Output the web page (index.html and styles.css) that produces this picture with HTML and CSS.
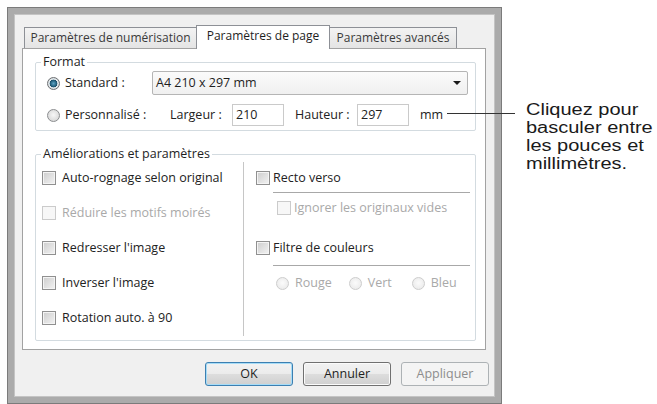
FILE: index.html
```html
<!DOCTYPE html>
<html lang="fr">
<head>
<meta charset="utf-8">
<title>Paramètres de page</title>
<link rel="stylesheet" href="styles.css">
</head>
<body>
<div class="page">
  <div class="dialog">
    <div class="client">
      <div class="tabs">
        <div class="tab t1">Paramètres de numérisation</div>
        <div class="tab t2 active">Paramètres de page</div>
        <div class="tab t3">Paramètres avancés</div>
      </div>
      <div class="panel">
        <fieldset class="group format">
          <legend>Format</legend>
          <div class="gbody">
            <div class="row r1">
              <span class="radio checked"></span>
              <span class="lbl std">Standard :</span>
              <div class="combo"><span>A4 210 x 297 mm</span><span class="arrow"></span></div>
            </div>
            <div class="row r2">
              <span class="radio"></span>
              <span class="lbl perso">Personnalisé :</span>
              <span class="lbl larg">Largeur :</span>
              <span class="input">210</span>
              <span class="lbl haut">Hauteur :</span>
              <span class="input">297</span>
              <span class="lbl mm">mm</span>
            </div>
          </div>
        </fieldset>
        <fieldset class="group enh">
          <legend>Améliorations et paramètres</legend>
          <div class="cols">
            <div class="col left">
              <div class="crow"><span class="check"></span><span>Auto-rognage selon original</span></div>
              <div class="crow disabled"><span class="check"></span><span>Réduire les motifs moirés</span></div>
              <div class="crow"><span class="check"></span><span>Redresser l'image</span></div>
              <div class="crow"><span class="check"></span><span>Inverser l'image</span></div>
              <div class="crow"><span class="check"></span><span>Rotation auto. à 90</span></div>
            </div>
            <div class="col right">
              <div class="crow"><span class="check"></span><span>Recto verso</span></div>
              <div class="sep"></div>
              <div class="crow sub disabled"><span class="check"></span><span>Ignorer les originaux vides</span></div>
              <div class="crow filtre"><span class="check"></span><span>Filtre de couleurs</span></div>
              <div class="sep"></div>
              <div class="radios disabled">
                <span class="ritem"><span class="radio"></span><span>Rouge</span></span>
                <span class="ritem vert"><span class="radio"></span><span>Vert</span></span>
                <span class="ritem bleu"><span class="radio"></span><span>Bleu</span></span>
              </div>
            </div>
          </div>
        </fieldset>
      </div>
      <div class="buttons">
        <button class="btn default">OK</button>
        <button class="btn">Annuler</button>
        <button class="btn disabled">Appliquer</button>
      </div>
    </div>
  </div>
  <div class="callout">
    <div class="ctext">Cliquez pour<br>basculer entre<br>les pouces et<br>millimètres.</div>
  </div>
</div>
</body>
</html>
```
FILE: styles.css
```css
* { box-sizing: border-box; }
html, body { margin: 0; background: #ffffff; }
body {
  font-family: "Open Sans", "Noto Sans", "DejaVu Sans", sans-serif;
  font-size: 12.5px;
  line-height: 16px;
  color: #222;
}
.page {
  display: flex;
  align-items: flex-start;
  padding: 7px 0 0 7px;
}
.dialog {
  width: 495px;
  height: 397px;
  border: 1px solid #7b7b7b;
  background: #ababab;
  padding: 6px;
  display: flex;
}
.client {
  flex: 1;
  border: 1px solid #c4c4c4;
  background: #f0f0f0;
  padding: 10px 5px 0 7px;
  display: flex;
  flex-direction: column;
}
.tabs {
  display: flex;
  height: 23px;
  margin-left: 2px;
  align-items: flex-end;
  position: relative;
  z-index: 1;
}
.tab {
  height: 21px;
  border: 1px solid #8d9096;
  border-bottom: none;
  background: linear-gradient(#f3f3f3, #e4e4e4);
  color: #3a3a3a;
  font-size: 12px;
  line-height: 19px;
  text-align: center;
  white-space: nowrap;
}
.t1 { width: 172px; border-right: none; }
.t2 { width: 134px; }
.t3 { width: 127px; border-left: none; }
.tab.active {
  height: 24px;
  margin-bottom: -1px;
  background: #ffffff;
  color: #1e1e1e;
  line-height: 20px;
}
.panel {
  height: 302px;
  margin-right: 3px;
  border: 1px solid #a2a2a2;
  background: #ffffff;
  padding: 5px 9px 0 12px;
}
.group {
  margin: 0;
  padding: 0;
  min-width: 0;
  border: 1px solid #d3dbe0;
  border-radius: 2px;
}
.group legend {
  margin-left: 5px;
  padding: 0 2px;
  line-height: 16px;
  color: #1e1e1e;
}
.format .gbody { padding: 1px 7px 4px 11px; }
.row { display: flex; align-items: center; }
.r1 { height: 24px; }
.r2 { height: 22px; margin-top: 9px; }
.radio {
  width: 13px;
  height: 13px;
  flex: none;
  border-radius: 50%;
  border: 1px solid #8b8d8f;
  background: radial-gradient(circle at 50% 45%, #f7f7f7 0, #dadada 6px);
}
.radio.checked {
  border-color: #6d7073;
  background: radial-gradient(circle at 50% 50%, #5ea4c4 0, #23607e 3px, #1d4d66 3.6px, #e8eef1 4.2px, #cfd3d6 6px);
}
.lbl { white-space: nowrap; }
.r1 .radio, .r2 .radio { margin-right: 5px; }
.std { width: 87px; }
.perso { width: 105px; }
.larg { width: 62px; }
.haut { width: 62px; margin-left: 11px; }
.mm { margin-left: 11px; }
.combo {
  width: 316px;
  height: 24px;
  border: 1px solid #b5b5b5;
  border-radius: 2px;
  background: linear-gradient(#fbfbfb, #f0f0f0);
  display: flex;
  align-items: center;
  padding-left: 3px;
  color: #1e1e1e;
}
.arrow {
  margin-left: auto;
  margin-right: 6px;
  width: 0;
  height: 0;
  border-left: 4px solid transparent;
  border-right: 4px solid transparent;
  border-top: 4px solid #1a1a1a;
}
.input {
  width: 52px;
  height: 22px;
  border: 1px solid #cacaca;
  background: #ffffff;
  padding-left: 3px;
  line-height: 20px;
}
.enh { margin-top: 15px; height: 195px; }
.cols { display: flex; height: 177px; padding-bottom: 3px; }
.col.left { width: 207px; padding: 6px 0 0 6px; }
.col.right {
  flex: 1;
  border-left: 1px solid #c6c6c6;
  padding: 6px 5px 0 12px;
}
.crow {
  height: 20px;
  display: flex;
  align-items: center;
  white-space: nowrap;
}
.col.left .crow + .crow { margin-top: 15px; }
.check {
  width: 14px;
  height: 14px;
  flex: none;
  border: 1px solid #909090;
  background: linear-gradient(135deg, #cdcdcd, #f3f3f3);
  box-shadow: inset 0 0 0 1px #f4f4f4;
}
.col.left .check { margin-right: 6px; }
.col.right .check { margin-right: 3px; }
.disabled { color: #a9a9a9; }
.disabled .check {
  border-color: #cbcbcb;
  background: #f7f7f7;
  box-shadow: none;
}
.disabled .radio {
  border-color: #cdcdcd;
  background: radial-gradient(circle at 50% 45%, #fbfbfb 0, #ececec 6px);
}
.sep {
  height: 1px;
  margin: 4px 0 0 17px;
  background: #a8a8a8;
}
.crow.sub { margin: 5px 0 0 21px; }
.crow.filtre { margin-top: 20px; }
.filtre + .sep { margin-top: 7px; }
.radios {
  display: flex;
  align-items: center;
  height: 20px;
  margin: 7px 0 0 20px;
}
.ritem { display: flex; align-items: center; }
.ritem .radio { margin-right: 6px; }
.vert { margin-left: 17px; }
.bleu { margin-left: 20px; }
.buttons {
  display: flex;
  justify-content: flex-end;
  gap: 10px;
  margin-top: 12px;
}
.btn {
  width: 88px;
  height: 24px;
  font: inherit;
  font-size: 12.5px;
  color: #1e1e1e;
  border: 1px solid #707070;
  border-radius: 3px;
  background: linear-gradient(#f2f2f2 0, #ebebeb 50%, #dddddd 51%, #cfcfcf 100%);
  box-shadow: inset 0 0 0 1px #fbfbfb;
  padding: 0;
}
.btn.default {
  border-color: #3c7fb1;
  box-shadow: inset 0 0 0 1px #a6dcf7;
}
.btn.disabled {
  border-color: #adb2b5;
  background: #f4f4f4;
  box-shadow: none;
  color: #8d8d8d;
}
.callout {
  position: relative;
  margin-left: 24px;
  padding-top: 94px;
}
.callout::before {
  content: "";
  position: absolute;
  left: -79px;
  top: 106px;
  width: 68px;
  height: 1px;
  background: #333;
}
.ctext {
  font-family: "Liberation Sans", Arial, sans-serif;
  font-size: 16px;
  line-height: 18px;
  color: #1a1a1a;
  white-space: nowrap;
  transform: scaleX(1.25);
  transform-origin: left top;
}
```
